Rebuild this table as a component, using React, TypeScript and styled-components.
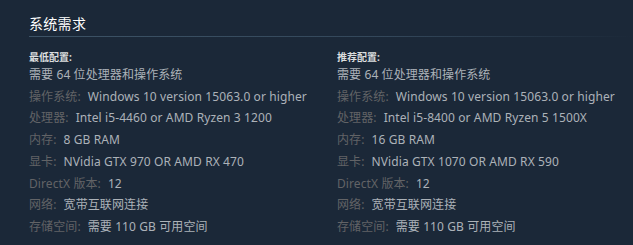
import { createGlobalStyle, styled } from "styled-components"

const Global = createGlobalStyle`
  html, body {
    margin: 0;
    background: #1b2838;
  }
  body {
    font-family: "Noto Sans", Arial, "Noto Sans CJK SC", sans-serif;
  }
`

const Wrapper = styled.div`
  padding: 14px 0 0 29px;
  width: 604px;
`

const Title = styled.h2`
  margin: 0;
  font-size: 14px;
  font-weight: normal;
  color: #ffffff;
  line-height: 20px;
  padding-bottom: 2px;
  letter-spacing: 0.3px;
  border-bottom: 1px solid transparent;
  border-image: linear-gradient(to right, #3d5366 0%, #33475a 60%, #1b2838 100%) 1;
`

const Columns = styled.div`
  display: grid;
  grid-template-columns: 308px 1fr;
  padding-top: 14px;
`

const Heading = styled.div`
  font-size: 10px;
  font-weight: bold;
  color: #dcdedf;
  line-height: 12px;
  margin-bottom: 1px;
`

const List = styled.ul`
  list-style: none;
  margin: 0;
  padding: 0;
`

const Item = styled.li`
  font-size: 12px;
  line-height: 21.7px;
  letter-spacing: 0.1px;
  color: #acb2b8;
  white-space: nowrap;
`

const Label = styled.span`
  color: #626366;
  margin-right: 7px;
`

type Spec = [string | null, string]

const minimum: Spec[] = [
  [null, "需要 64 位处理器和操作系统"],
  ["操作系统:", "Windows 10 version 15063.0 or higher"],
  ["处理器:", "Intel i5-4460 or AMD Ryzen 3 1200"],
  ["内存:", "8 GB RAM"],
  ["显卡:", "NVidia GTX 970 OR AMD RX 470"],
  ["DirectX 版本:", "12"],
  ["网络:", "宽带互联网连接"],
  ["存储空间:", "需要 110 GB 可用空间"],
]

const recommended: Spec[] = [
  [null, "需要 64 位处理器和操作系统"],
  ["操作系统:", "Windows 10 version 15063.0 or higher"],
  ["处理器:", "Intel i5-8400 or AMD Ryzen 5 1500X"],
  ["内存:", "16 GB RAM"],
  ["显卡:", "NVidia GTX 1070 OR AMD RX 590"],
  ["DirectX 版本:", "12"],
  ["网络:", "宽带互联网连接"],
  ["存储空间:", "需要 110 GB 可用空间"],
]

function Column({ title, specs }: { title: string; specs: Spec[] }) {
  return (
    <div>
      <Heading>{title}</Heading>
      <List>
        {specs.map(([label, value], i) => (
          <Item key={i}>
            {label && <Label>{label}</Label>}
            {value}
          </Item>
        ))}
      </List>
    </div>
  )
}

export default function App() {
  return (
    <>
      <Global />
      <Wrapper>
        <Title>系统需求</Title>
        <Columns>
          <Column title='最低配置:' specs={minimum} />
          <Column title='推荐配置:' specs={recommended} />
        </Columns>
      </Wrapper>
    </>
  )
}
